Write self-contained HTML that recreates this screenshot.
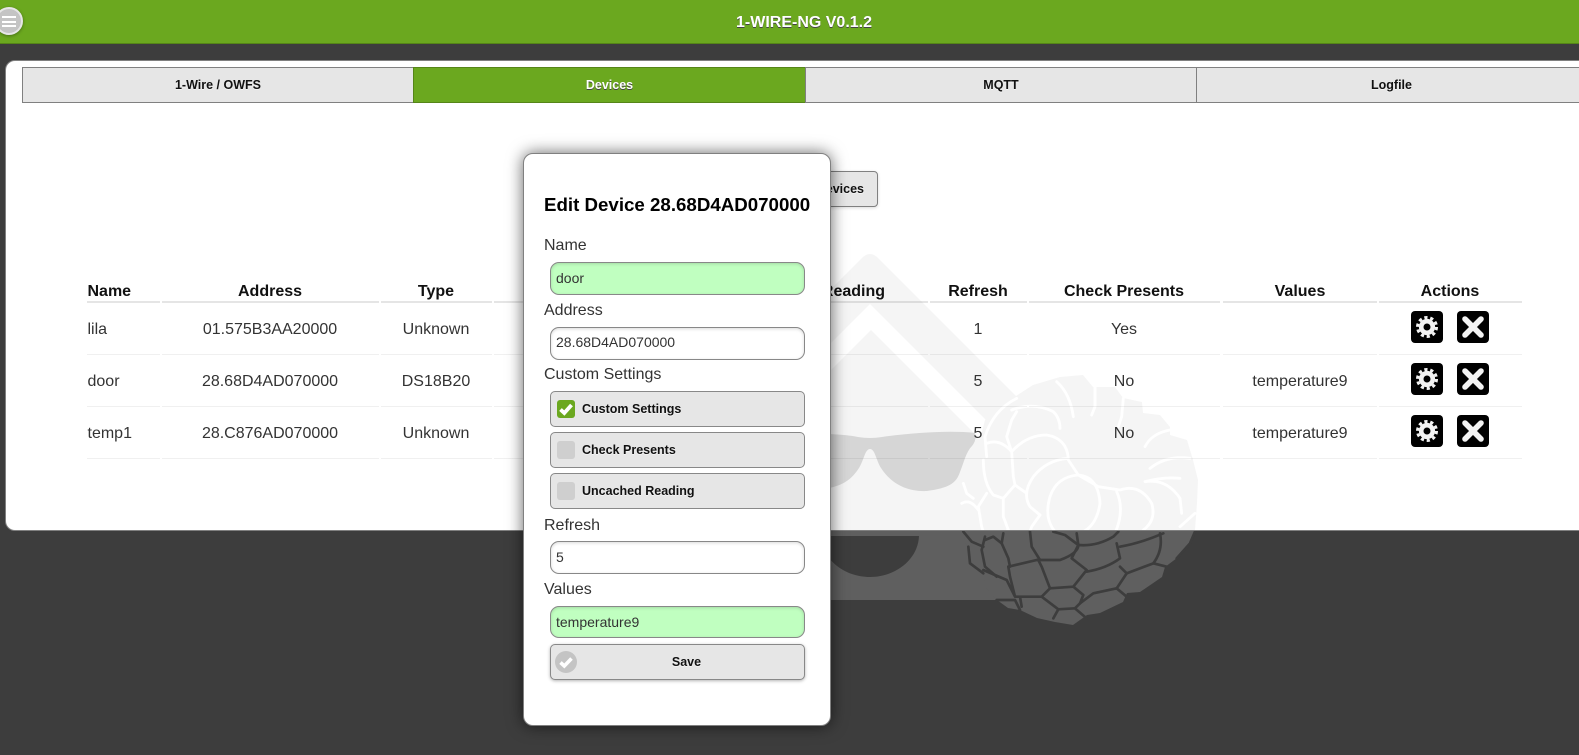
<!DOCTYPE html>
<html lang="en">
<head>
<meta charset="utf-8">
<title>1-WIRE-NG</title>
<style>
html,body{margin:0;padding:0;width:1579px;height:755px;overflow:hidden;background:#3d3d3d;font-family:"Liberation Sans",sans-serif;color:#333}
*{box-sizing:border-box}
.a{position:absolute}
#hdr{left:0;top:0;width:1579px;height:44px;background:#6ba81f;border-bottom:1px solid #558518;z-index:5}
#ttl{left:604px;width:400px;top:13px;height:20px;line-height:20px;text-align:center;font-size:16px;font-weight:bold;color:#fff;text-shadow:0 1px 0 #444}
#menu{left:-5px;top:7px;width:28px;height:28px;border-radius:50%;background:#c4c4c4;border:2px solid #e6e6e6;box-shadow:0 1px 3px rgba(0,0,0,.35)}
#menu i{position:absolute;left:5px;width:14px;height:2px;background:#fff;display:block}
#panel{left:5px;top:60px;width:1640px;height:471px;background:#fff;border:1px solid #808080;border-radius:10px;z-index:1}
#logo{left:0;top:0;z-index:2}
.tab{top:67px;height:36px;line-height:34px;background:#e6e6e6;border:1px solid #808080;border-right:0;text-align:center;font-size:12.5px;font-weight:bold;color:#111;text-shadow:0 1px 0 #f3f3f3;z-index:3}
.tab.on{background:#6ba81f;border-color:#558518;color:#fff;text-shadow:0 1px 0 #444}
#disc{left:640px;top:171px;width:238px;height:36px;line-height:34px;background:#e6e6e6;border:1px solid #808080;border-radius:4px;font-size:12.5px;font-weight:bold;color:#111;text-align:right;padding-right:13px;text-shadow:0 1px 0 #f3f3f3;z-index:3;box-shadow:0 1px 3px rgba(0,0,0,.15)}
.c{height:20px;line-height:20px;font-size:16px;text-align:center;width:240px;z-index:3;white-space:nowrap}
.h{font-weight:bold;color:#111}
.l{text-align:left}
.ln{height:1px;background:rgba(0,0,0,.06);z-index:3}
.hl{height:2px;background:rgba(0,0,0,.1);z-index:3}
.ib{width:32px;height:32px;z-index:3}
#modal{left:523px;top:153px;width:308px;height:573px;background:#fff;border:1px solid #808080;border-radius:10px;box-shadow:0 0 16px rgba(0,0,0,.6);z-index:4}
#modal .a{white-space:nowrap}
.lb{left:20px;height:20px;line-height:20px;font-size:16px;color:#333}
.in{left:26px;width:255px;height:33px;line-height:30px;border:1px solid #888;border-radius:9px;background:#fff;padding-left:5px;font-size:14px;color:#333;box-shadow:inset 0 1px 3px rgba(0,0,0,.15)}
.in.g{background:#c0ffc0}
.cb{left:26px;width:255px;height:36px;line-height:34px;border:1px solid #888;border-radius:5px;background:#e6e6e6;font-size:12.5px;font-weight:bold;color:#111;text-shadow:0 1px 0 #f3f3f3;padding-left:31px}
.bx{position:absolute;left:6px;top:8px;width:18px;height:18px;border-radius:3px;background:#cfcfcf}
.bx.on{background:#6ba81f}
</style>
</head>
<body>
<div class="a" id="hdr">
  <div class="a" id="ttl">1-WIRE-NG V0.1.2</div>
  <div class="a" id="menu"><i style="top:7px"></i><i style="top:11.5px"></i><i style="top:16px"></i></div>
</div>

<div class="a" id="panel"></div>

<svg class="a" id="logo" width="1579" height="755" viewBox="0 0 1579 755" xmlns="http://www.w3.org/2000/svg">
  <defs>
    <clipPath id="up"><rect x="0" y="61" width="1579" height="469"/></clipPath>
    <clipPath id="dn"><rect x="0" y="531" width="1579" height="224"/></clipPath>
    <path id="house" d="M530 600 L530 590 L862 258 Q870 250 878 258 L1040 420 L1040 600 Z"/>
    <path id="sil" d="M1060 377 L1083 375 L1093 387 L1115 387 L1123 398 L1142 402 L1143 413 L1160 415 L1170 427 L1170 435 L1187 440 L1193 460 L1198 480 L1197 503 L1195 530 L1190 543 L1177 558 L1165 567 L1162 577 L1140 592 L1127 593 L1123 602 L1100 613 L1087 615 L1073 625 L1055 622 L1037 618 L1020 610 L1008 608 L997 600 L985 587 L983 573 L970 565 L967 547 L962 530 L960 510 L967 500 L963 483 L967 457 L978 447 L985 420 L1013 398 L1033 385 Z"/>
    <g id="lnU" fill="none" stroke-width="8.5" stroke-linejoin="round" stroke-linecap="round" transform="translate(950 370) scale(.33333)">
      <path d="M200 125 L185 150 L170 200 L185 245 M185 120 Q250 95 310 125 Q330 145 330 175"/>
      <path d="M320 35 Q360 70 370 140 M435 50 L435 110 L425 135 M520 85 L515 140 L505 170"/>
      <path d="M660 180 Q605 190 585 230 M720 265 Q650 255 600 295 M690 325 Q640 320 585 335 Q650 325 690 385 L695 430 M735 430 L690 470"/>
      <path d="M185 245 Q230 195 290 195 Q350 205 355 265 Q290 270 250 320 Q215 370 240 410 L270 435"/>
      <path d="M385 315 Q320 320 300 380 Q280 450 320 490 L390 520 M385 315 Q445 320 450 400 Q440 470 390 490"/>
      <path d="M355 270 L385 315 L445 350 L510 360 Q570 340 605 400 Q620 450 580 480 M500 365 Q525 420 495 490"/>
      <path d="M200 85 Q130 120 105 200 L110 260 M110 220 Q150 205 185 245 L190 320 L195 345 M100 270 Q100 340 130 375 L160 385 L195 345 L230 370"/>
      <path d="M110 370 L85 410 L95 470 L105 500 M160 385 L160 440 L175 480 M35 400 Q60 385 85 420 M40 340 L50 370 L70 385 M270 435 L245 470 L240 485 M175 480 L160 490"/>
    </g>
    <g id="lnD" fill="none" stroke-width="8" stroke-linejoin="round" stroke-linecap="round" transform="translate(950 370) scale(.33333)">
      <path d="M40 485 L65 515 L100 530 M55 530 L60 580 L100 610 M105 500 L95 540 L105 590 L140 620 M160 490 L155 520 L175 565 L180 590"/>
      <path d="M105 510 L130 500 L155 520 M175 590 L260 570 L330 570 Q385 550 385 525 L380 490 M240 485 L245 530 L270 570 M310 485 L345 495 L385 525 Q440 530 490 500 L505 485"/>
      <path d="M385 525 L365 565 L410 600 L370 650 L300 655 L275 590 L265 570 M500 520 L510 565 Q470 595 410 605 M510 530 Q570 520 640 490"/>
      <path d="M630 490 Q640 540 610 580 L530 610 L500 655 L430 670 L390 700 L375 715 L325 718 L275 680 L300 655"/>
      <path d="M100 600 L170 630 L195 680 L240 680 L275 680 M175 590 L180 620 L195 680 M530 610 L510 590 M140 690 L195 690 L210 720 M210 680 L215 710"/>
      <path d="M370 650 L400 675 L390 700 M375 715 L410 745 M310 745 L325 718 M610 580 L650 590 M500 655 L530 680 M735 485 L720 520 L680 565"/>
    </g>
  </defs>

  <g clip-path="url(#up)">
    <use href="#house" fill="#f5f5f5"/>
    <path d="M700 474 L870 304 L1000 434 L1000 459 L871 330 L700 501 Z" fill="#fff"/>
    <path d="M750 437 C790 432 840 433 858 437 Q870 439 882 437 C910 433 950 430 975 433 Q977 440 972 446 C966 452 964 462 960 472 C956 484 948 488 927 491 C905 492 890 482 881 468 C876 460 875 449 870 449 C865 449 864 460 859 468 C850 482 840 486 825 489 L750 489 Z" fill="#d6d6d6"/>
    <use href="#sil" fill="#f5f5f5"/>
    <use href="#lnU" stroke="#fff"/>
  </g>

  <g clip-path="url(#dn)">
    <use href="#house" fill="#5f5f5f"/>
    <path d="M780 536 L919 536 C918 560 895 577 870 577 C845 577 822 560 821 536 Z" fill="#3d3d3d"/>
    <use href="#sil" fill="#5f5f5f"/>
    <use href="#lnD" stroke="#3d3d3d"/>
  </g>
</svg>

<div class="a tab" style="left:22px;width:391px">1-Wire / OWFS</div>
<div class="a tab on" style="left:413px;width:392px">Devices</div>
<div class="a tab" style="left:805px;width:391px">MQTT</div>
<div class="a tab" style="left:1196px;width:390px">Logfile</div>

<div class="a" id="disc">Discover Devices</div>

<!-- table header -->
<div class="a c h l" style="left:87.5px;top:282px">Name</div>
<div class="a c h" style="left:150px;top:282px">Address</div>
<div class="a c h" style="left:316px;top:282px">Type</div>
<div class="a c h" style="left:645px;top:282px;text-align:right">Uncached Reading</div>
<div class="a c h" style="left:858px;top:282px">Refresh</div>
<div class="a c h" style="left:1004px;top:282px">Check Presents</div>
<div class="a c h" style="left:1180px;top:282px">Values</div>
<div class="a c h" style="left:1330px;top:282px">Actions</div>

<div class="a hl" style="left:87px;top:301px;width:73px"></div>
<div class="a hl" style="left:162px;top:301px;width:217px"></div>
<div class="a hl" style="left:381px;top:301px;width:111px"></div>
<div class="a hl" style="left:494px;top:301px;width:434px"></div>
<div class="a hl" style="left:930px;top:301px;width:97px"></div>
<div class="a hl" style="left:1029px;top:301px;width:191px"></div>
<div class="a hl" style="left:1223px;top:301px;width:154px"></div>
<div class="a hl" style="left:1379px;top:301px;width:143px"></div>

<!-- row 1 -->
<div class="a c l" style="left:87.5px;top:320px">lila</div>
<div class="a c" style="left:150px;top:320px">01.575B3AA20000</div>
<div class="a c" style="left:316px;top:320px">Unknown</div>
<div class="a c" style="left:858px;top:320px">1</div>
<div class="a c" style="left:1004px;top:320px">Yes</div>
<!-- row 2 -->
<div class="a c l" style="left:87.5px;top:372px">door</div>
<div class="a c" style="left:150px;top:372px">28.68D4AD070000</div>
<div class="a c" style="left:316px;top:372px">DS18B20</div>
<div class="a c" style="left:858px;top:372px">5</div>
<div class="a c" style="left:1004px;top:372px">No</div>
<div class="a c" style="left:1180px;top:372px">temperature9</div>
<!-- row 3 -->
<div class="a c l" style="left:87.5px;top:424px">temp1</div>
<div class="a c" style="left:150px;top:424px">28.C876AD070000</div>
<div class="a c" style="left:316px;top:424px">Unknown</div>
<div class="a c" style="left:858px;top:424px">5</div>
<div class="a c" style="left:1004px;top:424px">No</div>
<div class="a c" style="left:1180px;top:424px">temperature9</div>

<!-- row lines -->
<div class="a ln" style="left:87px;top:354px;width:73px"></div>
<div class="a ln" style="left:162px;top:354px;width:217px"></div>
<div class="a ln" style="left:381px;top:354px;width:111px"></div>
<div class="a ln" style="left:494px;top:354px;width:434px"></div>
<div class="a ln" style="left:930px;top:354px;width:97px"></div>
<div class="a ln" style="left:1029px;top:354px;width:191px"></div>
<div class="a ln" style="left:1223px;top:354px;width:154px"></div>
<div class="a ln" style="left:1379px;top:354px;width:143px"></div>

<div class="a ln" style="left:87px;top:406px;width:73px"></div>
<div class="a ln" style="left:162px;top:406px;width:217px"></div>
<div class="a ln" style="left:381px;top:406px;width:111px"></div>
<div class="a ln" style="left:494px;top:406px;width:434px"></div>
<div class="a ln" style="left:930px;top:406px;width:97px"></div>
<div class="a ln" style="left:1029px;top:406px;width:191px"></div>
<div class="a ln" style="left:1223px;top:406px;width:154px"></div>
<div class="a ln" style="left:1379px;top:406px;width:143px"></div>

<div class="a ln" style="left:87px;top:458px;width:73px"></div>
<div class="a ln" style="left:162px;top:458px;width:217px"></div>
<div class="a ln" style="left:381px;top:458px;width:111px"></div>
<div class="a ln" style="left:494px;top:458px;width:434px"></div>
<div class="a ln" style="left:930px;top:458px;width:97px"></div>
<div class="a ln" style="left:1029px;top:458px;width:191px"></div>
<div class="a ln" style="left:1223px;top:458px;width:154px"></div>
<div class="a ln" style="left:1379px;top:458px;width:143px"></div>

<!-- action icons -->
<svg class="a ib" style="left:1411px;top:311px" viewBox="0 0 32 32"><rect width="32" height="32" rx="4" fill="#000"/><circle cx="16" cy="16" r="5.8" fill="none" stroke="#f3f3f3" stroke-width="4.6"/><circle cx="16" cy="16" r="9.5" fill="none" stroke="#f3f3f3" stroke-width="3" stroke-dasharray="3.2 2.77"/></svg>
<svg class="a ib" style="left:1457px;top:311px" viewBox="0 0 32 32"><rect width="32" height="32" rx="4" fill="#000"/><path d="M8 8 L24 24 M24 8 L8 24" stroke="#f3f3f3" stroke-width="5.6" stroke-linecap="round" fill="none"/></svg>
<svg class="a ib" style="left:1411px;top:363px" viewBox="0 0 32 32"><rect width="32" height="32" rx="4" fill="#000"/><circle cx="16" cy="16" r="5.8" fill="none" stroke="#f3f3f3" stroke-width="4.6"/><circle cx="16" cy="16" r="9.5" fill="none" stroke="#f3f3f3" stroke-width="3" stroke-dasharray="3.2 2.77"/></svg>
<svg class="a ib" style="left:1457px;top:363px" viewBox="0 0 32 32"><rect width="32" height="32" rx="4" fill="#000"/><path d="M8 8 L24 24 M24 8 L8 24" stroke="#f3f3f3" stroke-width="5.6" stroke-linecap="round" fill="none"/></svg>
<svg class="a ib" style="left:1411px;top:415px" viewBox="0 0 32 32"><rect width="32" height="32" rx="4" fill="#000"/><circle cx="16" cy="16" r="5.8" fill="none" stroke="#f3f3f3" stroke-width="4.6"/><circle cx="16" cy="16" r="9.5" fill="none" stroke="#f3f3f3" stroke-width="3" stroke-dasharray="3.2 2.77"/></svg>
<svg class="a ib" style="left:1457px;top:415px" viewBox="0 0 32 32"><rect width="32" height="32" rx="4" fill="#000"/><path d="M8 8 L24 24 M24 8 L8 24" stroke="#f3f3f3" stroke-width="5.6" stroke-linecap="round" fill="none"/></svg>

<!-- modal -->
<div class="a" id="modal">
  <div class="a" style="left:20px;top:40px;height:22px;line-height:22px;font-size:18.72px;font-weight:bold;color:#000">Edit Device 28.68D4AD070000</div>

  <div class="a lb" style="top:82px">Name</div>
  <div class="a in g" style="top:108px">door</div>

  <div class="a lb" style="top:147px">Address</div>
  <div class="a in" style="top:173px;line-height:28px">28.68D4AD070000</div>

  <div class="a lb" style="top:211px">Custom Settings</div>

  <div class="a cb" style="top:237px">
    <span class="bx on"><svg width="18" height="18" viewBox="0 0 18 18" style="display:block"><path d="M3.5 9.5 L7.3 13 L14.5 5" fill="none" stroke="#fff" stroke-width="3.8"/></svg></span>Custom Settings
  </div>
  <div class="a cb" style="top:278px"><span class="bx"></span>Check Presents</div>
  <div class="a cb" style="top:319px"><span class="bx"></span>Uncached Reading</div>

  <div class="a lb" style="top:362px">Refresh</div>
  <div class="a in" style="top:387px">5</div>

  <div class="a lb" style="top:426px">Values</div>
  <div class="a in g" style="top:452px;height:32px">temperature9</div>

  <div class="a cb" style="top:490px;padding-left:18px;text-align:center;box-shadow:0 1px 3px rgba(0,0,0,.3)">
    <svg width="22" height="22" viewBox="0 0 22 22" style="position:absolute;left:4px;top:6px"><circle cx="11" cy="11" r="11" fill="#c4c4c4"/><path d="M5.5 11.5 L9.3 15 L16.5 7.5" fill="none" stroke="#fff" stroke-width="3.6"/></svg>
    Save
  </div>
</div>
</body>
</html>
